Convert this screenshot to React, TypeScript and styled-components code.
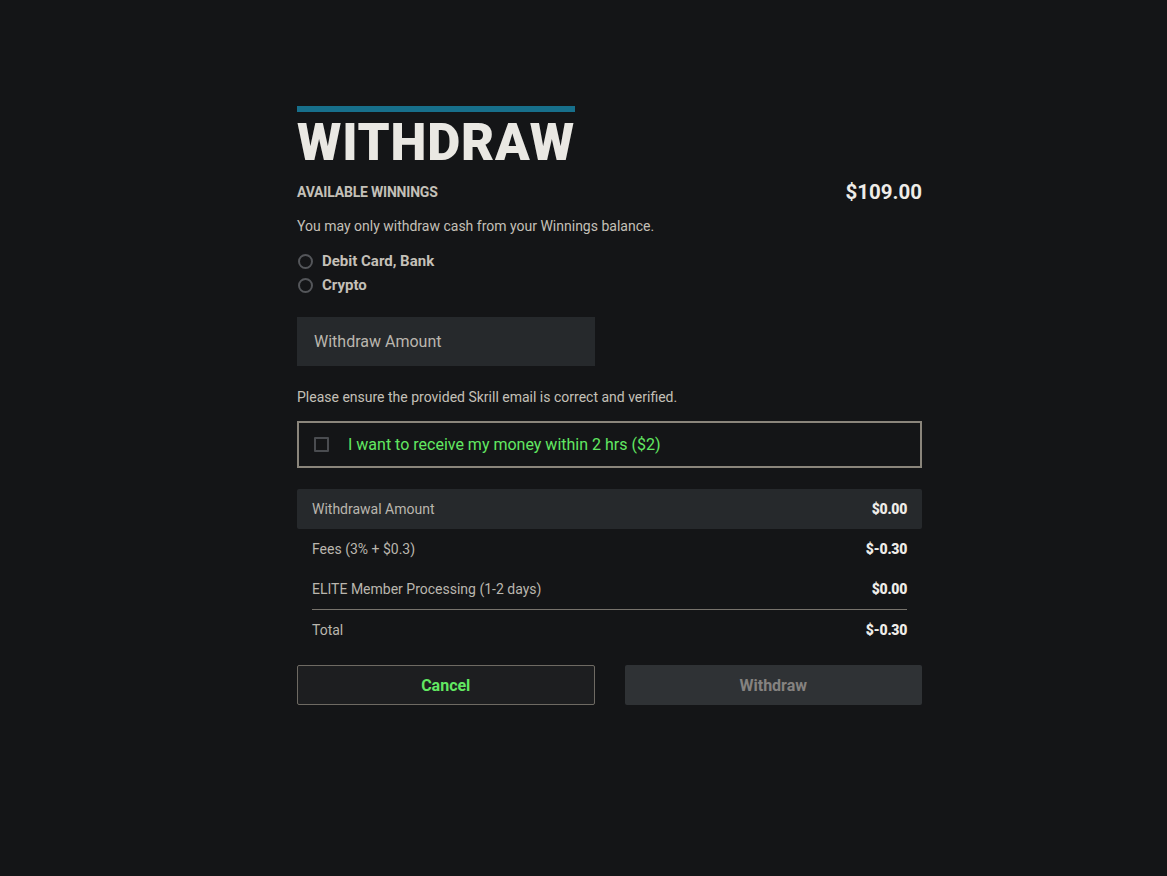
import React, { useState } from 'react';
import styled, { createGlobalStyle } from 'styled-components';

const GlobalStyle = createGlobalStyle`
  html, body {
    margin: 0;
    padding: 0;
    background: #141517;
    font-family: Roboto, 'Liberation Sans', sans-serif;
  }
`;

const Page = styled.div`
  min-height: 876px;
  display: flex;
  justify-content: center;
  padding: 106px 0 0 52px;
  box-sizing: border-box;
`;

const Panel = styled.div`
  width: 625px;
  display: flex;
  flex-direction: column;
`;

const TitleBlock = styled.div`
  align-self: flex-start;
  border-top: 6px solid #176f8b;
  padding-top: 8px;
`;

const Title = styled.h1`
  margin: 0;
  font-size: 51px;
  line-height: 46px;
  font-weight: 900;
  color: #eae8e3;
  letter-spacing: 0.8px;
`;

const BalanceRow = styled.div`
  display: flex;
  justify-content: space-between;
  align-items: center;
  margin-top: 14px;
`;

const Label = styled.span`
  font-size: 14px;
  font-weight: 700;
  text-transform: uppercase;
  color: #c4c0b8;
  letter-spacing: -0.2px;
`;

const Balance = styled.span`
  font-size: 20.5px;
  font-weight: 700;
  color: #eeece8;
`;

const Note = styled.p<{ $top: number }>`
  margin: ${(p) => p.$top}px 0 0;
  font-size: 14px;
  line-height: 18px;
  color: #c4c0b8;
`;

const Options = styled.div`
  display: flex;
  flex-direction: column;
  gap: 6px;
  margin-top: 17px;
`;

const Option = styled.label`
  display: flex;
  align-items: center;
  gap: 9px;
  font-size: 15px;
  font-weight: 700;
  color: #c4c0b8;
  cursor: pointer;
  line-height: 18px;
`;

const Radio = styled.span`
  width: 15px;
  height: 15px;
  box-sizing: border-box;
  border-radius: 50%;
  border: 2px solid #54565a;
  margin-left: 1px;
`;

const AmountInput = styled.input`
  margin-top: 23px;
  width: 298px;
  height: 49px;
  box-sizing: border-box;
  border: none;
  outline: none;
  background: #26292c;
  padding: 0 17px;
  font-family: inherit;
  font-size: 16px;
  color: #eae8e3;
  &::placeholder {
    color: #bab6ae;
  }
`;

const FastBox = styled.label`
  margin-top: 15px;
  height: 47px;
  box-sizing: border-box;
  border: 2px solid #8a857b;
  display: flex;
  align-items: center;
  gap: 19px;
  padding-left: 15px;
  font-size: 16px;
  color: #62e862;
  cursor: pointer;
`;

const Check = styled.span`
  width: 15px;
  height: 15px;
  box-sizing: border-box;
  border: 2px solid #4a4c50;
  border-radius: 1px;
`;

const Summary = styled.div`
  margin-top: 21px;
  display: flex;
  flex-direction: column;
`;

const SummaryRow = styled.div<{ $shaded?: boolean; $divider?: boolean }>`
  height: 40px;
  display: flex;
  align-items: center;
  justify-content: space-between;
  margin: 0 15px;
  ${(p) => (p.$shaded ? 'margin: 0; padding: 0 15px; background: #26292c; border-radius: 2px;' : '')}
  ${(p) => (p.$divider ? 'border-top: 1px solid #77736c;' : '')}
  font-size: 14px;
  color: #bab6ae;
`;

const Value = styled.span`
  font-weight: 900;
  color: #eeece8;
  font-size: 14px;
  letter-spacing: -0.3px;
`;

const Buttons = styled.div`
  margin-top: 15px;
  display: grid;
  grid-template-columns: 1fr 1fr;
  gap: 30px;
`;

const Button = styled.button<{ $primary?: boolean }>`
  height: 40px;
  font-family: inherit;
  font-size: 16px;
  font-weight: 700;
  border-radius: 2px;
  cursor: pointer;
  background: ${(p) => (p.$primary ? '#2f3235' : '#1d1e20')};
  color: ${(p) => (p.$primary ? '#858280' : '#62e862')};
  border: ${(p) => (p.$primary ? 'none' : '1px solid #6e6a63')};
`;

const rows = [
  { label: 'Withdrawal Amount', value: '$0.00', shaded: true },
  { label: 'Fees (3% + $0.3)', value: '$-0.30' },
  { label: 'ELITE Member Processing (1-2 days)', value: '$0.00' },
  { label: 'Total', value: '$-0.30', divider: true },
];

export default function App() {
  const [method, setMethod] = useState('');
  const [amount, setAmount] = useState('');

  return (
    <Page>
      <GlobalStyle />
      <Panel>
        <TitleBlock>
          <Title>WITHDRAW</Title>
        </TitleBlock>
        <BalanceRow>
          <Label>Available Winnings</Label>
          <Balance>$109.00</Balance>
        </BalanceRow>
        <Note $top={13}>You may only withdraw cash from your Winnings balance.</Note>
        <Options>
          {['Debit Card, Bank', 'Crypto'].map((m) => (
            <Option key={m} onClick={() => setMethod(m)} data-selected={method === m}>
              <Radio />
              {m}
            </Option>
          ))}
        </Options>
        <AmountInput
          placeholder="Withdraw Amount"
          value={amount}
          onChange={(e) => setAmount(e.target.value)}
        />
        <Note $top={22}>Please ensure the provided Skrill email is correct and verified.</Note>
        <FastBox>
          <Check />
          I want to receive my money within 2 hrs ($2)
        </FastBox>
        <Summary>
          {rows.map((r) => (
            <SummaryRow key={r.label} $shaded={r.shaded} $divider={r.divider}>
              <span>{r.label}</span>
              <Value>{r.value}</Value>
            </SummaryRow>
          ))}
        </Summary>
        <Buttons>
          <Button>Cancel</Button>
          <Button $primary>Withdraw</Button>
        </Buttons>
      </Panel>
    </Page>
  );
}
